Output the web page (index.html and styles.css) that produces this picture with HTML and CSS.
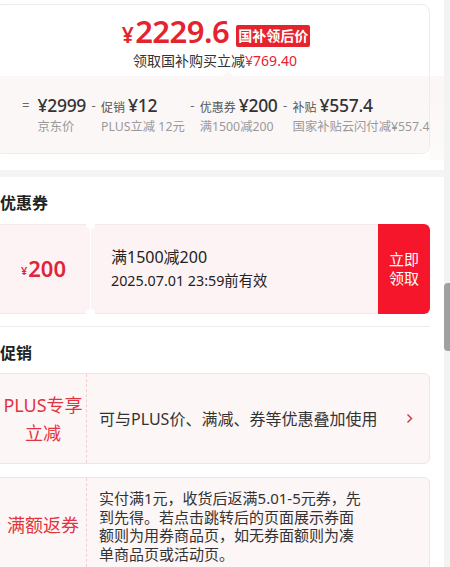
FILE: index.html
```html
<!DOCTYPE html>
<html lang="zh-CN">
<head>
<meta charset="utf-8">
<title>价格详情</title>
<link rel="stylesheet" href="styles.css">
</head>
<body>
<div class="app">
  <div class="main">
    <div class="price-card">
      <div class="price-top">
        <div class="price-line">
          <span class="price"><span class="yen">¥</span>2229.6</span>
          <span class="badge">国补领后价</span>
        </div>
        <div class="price-sub">领取国补购买立减<span class="red">¥769.40</span></div>
      </div>
      <div class="breakdown">
        <span class="op">=</span>
        <div class="col">
          <div class="val"><b>¥2999</b></div>
          <div class="sub">京东价</div>
        </div>
        <span class="op">-</span>
        <div class="col">
          <div class="val"><i>促销</i><b>¥12</b></div>
          <div class="sub">PLUS立减 12元</div>
        </div>
        <span class="op">-</span>
        <div class="col">
          <div class="val"><i>优惠券</i><b>¥200</b></div>
          <div class="sub">满1500减200</div>
        </div>
        <span class="op">-</span>
        <div class="col">
          <div class="val"><i>补贴</i><b>¥557.4</b></div>
          <div class="sub">国家补贴云闪付减¥557.4</div>
        </div>
      </div>
    </div>

    <div class="band"></div>

    <h2 class="sec-title">优惠券</h2>
    <div class="coupon">
      <div class="cp-amount"><span class="cp-yen">¥</span>200</div>
      <div class="cp-info">
        <div class="cp-rule">满1500减200</div>
        <div class="cp-date">2025.07.01 23:59前有效</div>
      </div>
      <div class="cp-btn">立即<br>领取</div>
    </div>

    <div class="divider"></div>

    <h2 class="sec-title sec-title-2">促销</h2>
    <div class="promo">
      <div class="promo-label">PLUS专享<br>立减</div>
      <div class="promo-text promo-text-lg">可与PLUS价、满减、券等优惠叠加使用</div>
      <svg class="chev" width="7" height="11" viewBox="0 0 7 11"><path d="M1.5 1.5 L5.5 5.5 L1.5 9.5" fill="none" stroke="#d0303c" stroke-width="1.4"/></svg>
    </div>
    <div class="promo promo-2">
      <div class="promo-label">满额返券</div>
      <div class="promo-text promo-text-sm">实付满1元，收货后返满5.01-5元券，先<br>到先得。若点击跳转后的页面展示券面<br>额则为用券商品页，如无券面额则为凑<br>单商品页或活动页。</div>
    </div>
  </div>
  <div class="scrollbar"><div class="thumb"></div></div>
</div>
</body>
</html>
```

FILE: styles.css
```css
* { box-sizing: border-box; }
html, body {
  margin: 0;
  padding: 0;
  background: #fff;
}
body {
  width: 450px;
  height: 567px;
  overflow: hidden;
  font-family: "Noto Sans", "Noto Sans CJK SC", sans-serif;
  color: #333;
}
.app {
  display: flex;
  height: 567px;
}
.main {
  width: 444px;
  flex: none;
  overflow: hidden;
}
.scrollbar {
  width: 6px;
  flex: none;
  background: #f3f3f3;
  padding-top: 283px;
}
.thumb {
  height: 68px;
  background: #a0a0a0;
  border-radius: 4px 0 0 4px;
}

/* price card */
.price-card {
  position: relative;
  margin: 4px 0 0 -6px;
  width: 436px;
  border: 1px solid #ececec;
  border-radius: 8px;
  background: #fff;
}
.price-top {
  height: 71px;
  padding-top: 10px;
  position: relative;
}
.price-top::after {
  content: "";
  position: absolute;
  left: 228px;
  bottom: 0;
  border: 5px solid transparent;
  border-bottom-color: #fcf6f6;
  border-top: 0;
}
.price-line {
  display: flex;
  justify-content: center;
  align-items: center;
  height: 36px;
  gap: 7px;
  padding-left: 8px;
}
.price {
  color: #e4232f;
  font-size: 31px;
  font-weight: 600;
  line-height: 36px;
  letter-spacing: -0.5px;
}
.yen {
  font-size: 21px;
  margin-right: 2px;
}
.badge {
  background: #e4232d;
  color: #fff;
  font-weight: 700;
  font-size: 14px;
  line-height: 22px;
  height: 22px;
  padding: 0 2px;
  border-radius: 2px;
  margin-top: 6px;
}
.price-sub {
  text-align: center;
  font-size: 14px;
  line-height: 20px;
  color: #333;
  padding-left: 6px;
}
.red { color: #e4232f; }

.breakdown {
  position: relative;
  display: flex;
  align-items: flex-start;
  gap: 5.5px;
  height: 77px;
  padding: 18px 0 0 27px;
  background: #fcf7f7;
  border-radius: 0 0 8px 8px;
}
.breakdown::after {
  content: "";
  position: absolute;
  top: 0;
  right: -19px;
  width: 18px;
  height: 84px;
  background: linear-gradient(#fcf6f6, #fdfafa);
}
.op {
  font-size: 13px;
  line-height: 22px;
  color: #666;
  width: 4px;
  text-align: center;
}
.op:first-child { width: 6px; margin-right: 4px; }
.col { display: flex; flex-direction: column; }
.val {
  display: flex;
  align-items: baseline;
  gap: 3px;
  height: 22px;
  line-height: 22px;
  white-space: nowrap;
}
.val i {
  font-style: normal;
  font-size: 12px;
  color: #555;
}
.val b {
  font-weight: 500;
  font-size: 17.5px;
  color: #333;
  letter-spacing: -0.3px;
}
.sub {
  font-size: 12.3px;
  line-height: 20px;
  color: #999;
  white-space: nowrap;
  margin-top: 1px;
}

/* band */
.band {
  height: 7px;
  margin-top: 16px;
  background: #f4f4f7;
}

.sec-title {
  margin: 14px 0 0;
  font-size: 16px;
  font-weight: 700;
  line-height: 24px;
  color: #222;
}

/* coupon */
.coupon {
  display: flex;
  height: 90px;
  margin: 9px 0 0 -6px;
  width: 436px;
}
.cp-amount {
  position: relative;
  width: 96px;
  padding-left: 2px;
  background: #fdf3f4;
  border: 1px solid #f4e8e9;
  border-right: 0;
  border-radius: 6px 0 0 6px;
  display: flex;
  align-items: center;
  justify-content: center;
  color: #e0243a;
  font-size: 22px;
  font-weight: 600;
  padding-bottom: 3px;
}
.cp-yen {
  font-size: 11px;
  margin-top: 6px;
  margin-right: 1px;
}
.cp-info {
  position: relative;
  flex: 1;
  margin-left: 1px;
  background: #fdf3f4;
  border-top: 1px solid #f4e8e9;
  border-bottom: 1px solid #f4e8e9;
  padding: 21px 0 0 20px;
}
.cp-info::before,
.cp-info::after {
  content: "";
  position: absolute;
  left: -5px;
  width: 9px;
  height: 9px;
  border-radius: 50%;
  background: #fff;
}
.cp-info::before { top: -5px; }
.cp-info::after { bottom: -5px; }
.cp-rule {
  font-size: 16px;
  line-height: 22px;
  color: #222;
}
.cp-date {
  font-size: 14.3px;
  line-height: 26px;
  color: #222;
}
.cp-btn {
  width: 52px;
  background: #f5162c;
  color: #fff;
  border-radius: 0 6px 6px 0;
  font-size: 15px;
  line-height: 19px;
  display: flex;
  align-items: center;
  justify-content: center;
  text-align: center;
}

.divider {
  height: 1px;
  width: 430px;
  background: #ededed;
  margin-top: 12px;
}
.sec-title-2 { margin-top: 14px; }

/* promos */
.promo {
  display: flex;
  align-items: center;
  height: 91px;
  margin: 8px 0 0 -6px;
  width: 436px;
  background: #fdf6f6;
  border: 1px solid #f4e3e4;
  border-radius: 6px;
}
.promo-2 {
  margin-top: 13px;
  height: 96px;
  align-items: stretch;
}
.promo-label {
  width: 92px;
  align-self: stretch;
  padding-left: 5px;
  border-right: 1px dashed #f0cfd3;
  display: flex;
  align-items: center;
  justify-content: center;
  text-align: center;
  color: #e2343f;
  font-size: 18px;
  line-height: 28px;
}
.promo-text {
  flex: 1;
  padding-left: 12px;
  color: #333;
}
.promo-text-lg {
  font-size: 16px;
  line-height: 22px;
}
.promo-text-sm {
  font-size: 15px;
  line-height: 18.5px;
  padding-top: 11px;
}
.chev {
  margin-right: 16px;
  flex: none;
}
```
